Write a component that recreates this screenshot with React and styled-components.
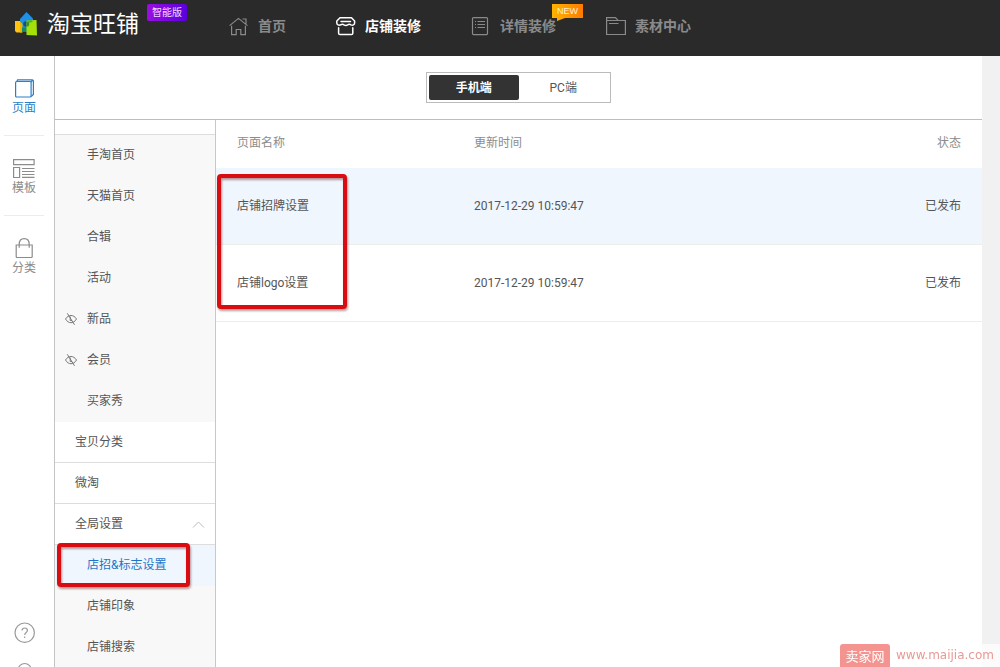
import React from 'react';
import styled, { createGlobalStyle } from 'styled-components';

const GlobalStyle = createGlobalStyle`
  * { box-sizing: border-box; }
  body {
    margin: 0;
    background: #f1f1f1;
    color: #555;
    font: 12px/20px Roboto, "Noto Sans CJK SC", sans-serif;
  }
  a { color: inherit; text-decoration: none; }
  button { font: inherit; color: inherit; border: 0; background: none; padding: 0; cursor: pointer; }
  svg { display: block; flex: none; }
`;

const Page = styled.div`
  display: flex;
  flex-direction: column;
  height: 100vh;
  overflow: hidden;
`;

const Header = styled.header`
  display: flex;
  align-items: flex-start;
  flex: none;
  height: 56px;
  padding-left: 14px;
  background: #2a2a2a;
`;

const Brand = styled.a`
  display: flex;
  align-items: flex-start;
  width: 215px;
`;

const BrandMark = styled.svg`
  margin-top: 11px;
`;

const BrandName = styled.span`
  margin: 8px 8px 0 9px;
  color: #fff;
  font-size: 23px;
  line-height: 34px;
`;

const EditionBadge = styled.span`
  margin-top: 4px;
  padding: 0 5px;
  border-radius: 2px;
  background: linear-gradient(90deg, #9a0ee0, #5a00dc);
  color: #f3d8ff;
  font-size: 10px;
  line-height: 17px;
`;

const TopNav = styled.nav`
  display: flex;
  gap: 50px;
  padding-top: 16px;
`;

const TopLink = styled.a`
  position: relative;
  display: flex;
  align-items: center;
  gap: 9px;
  color: ${(p) => (p.$active ? '#fff' : '#8a8a8a')};
  font-size: 14px;
  font-weight: 700;
`;

const NewBadge = styled.span`
  position: absolute;
  top: -12px;
  left: 81px;
  width: 31px;
  background: linear-gradient(90deg, #ffb400, #ff7a00);
  color: #fff3d0;
  font: 9px/14px "Liberation Sans", sans-serif;
  text-align: center;

  &::after {
    content: '';
    position: absolute;
    top: 14px;
    left: 5px;
    border-top: 3px solid #ffa800;
    border-right: 8px solid transparent;
  }
`;

const Body = styled.div`
  display: flex;
  flex: 1;
  min-height: 0;
  padding-right: 18px;
`;

const Rail = styled.nav`
  display: flex;
  flex-direction: column;
  flex: none;
  width: 55px;
  overflow: hidden;
  border-right: 1px solid #c4c4c4;
  background: #fff;
`;

const RailLink = styled.a`
  display: flex;
  flex-direction: column;
  align-items: center;
  width: 40px;
  height: 80px;
  margin-left: 4px;
  padding-top: 22px;
  border-bottom: 1px solid ${(p) => (p.$last ? 'transparent' : '#ececec')};
  color: ${(p) => (p.$active ? '#2b7fc8' : '#8c8c8c')};
`;

const RailTools = styled.div`
  display: flex;
  flex-direction: column;
  gap: 18px;
  margin: auto 0 -17px 14px;
  color: #999;
`;

const Workspace = styled.main`
  display: flex;
  flex: 1;
  flex-direction: column;
  min-width: 0;
  background: #fff;
`;

const DeviceBar = styled.div`
  display: flex;
  flex: none;
  justify-content: center;
  height: 64px;
  padding-top: 16px;
  border-bottom: 1px solid #bdbdbd;
`;

const DeviceSwitch = styled.div`
  display: flex;
  width: 185px;
  height: 31px;
  padding: 2px;
  border: 1px solid #bbb;
`;

const DeviceButton = styled.button`
  flex: 1;
  border-radius: 2px;
  background: ${(p) => (p.$active ? '#333' : '#fff')};
  color: ${(p) => (p.$active ? '#fff' : '#555')};
  font-weight: ${(p) => (p.$active ? 700 : 400)};
`;

const Columns = styled.div`
  display: flex;
  flex: 1;
  min-height: 0;
`;

const SideMenu = styled.nav`
  flex: none;
  width: 161px;
  padding-top: 14px;
  overflow: hidden;
  border-right: 1px solid #c8c8c8;
`;

const SubList = styled.div`
  border-top: 1px solid ${(p) => (p.$first ? '#ddd' : 'transparent')};
  margin-top: ${(p) => (p.$first ? '0' : '-1px')};
  background: #f8f8f8;
  background-clip: padding-box;
`;

const SubLink = styled.a`
  display: flex;
  align-items: center;
  height: 41px;
  padding: 0 11px 2px 10px;
  background: ${(p) => (p.$active ? '#eff6fe' : 'transparent')};
  color: ${(p) => (p.$active ? '#1f76c8' : '#555')};
`;

const IconSlot = styled.span`
  flex: none;
  width: 22px;
`;

const groupRow = `
  display: flex;
  align-items: center;
  justify-content: space-between;
  width: 100%;
  height: 41px;
  padding: 0 10px 0 20px;
  border-bottom: 1px solid #ddd;
`;

const GroupLink = styled.a`${groupRow}`;
const GroupButton = styled.button`${groupRow}`;

const Highlighted = styled.div`
  position: relative;
`;

const RedFrame = styled.div`
  position: absolute;
  top: ${(p) => p.$top}px;
  left: ${(p) => p.$left}px;
  width: ${(p) => p.$width}px;
  height: ${(p) => p.$height}px;
  border: 4px solid #d90c12;
  border-radius: 4px;
  filter: drop-shadow(1px 2px 1px rgba(90, 0, 0, 0.4));
  pointer-events: none;
`;

const TablePane = styled.section`
  position: relative;
  flex: 1;
  min-width: 0;
`;

const PageTable = styled.table`
  width: 100%;
  table-layout: fixed;
  border-collapse: separate;
  border-spacing: 0;
`;

const HeadCell = styled.th`
  width: ${(p) => p.$width || 'auto'};
  height: 48px;
  padding: 0 21px 2px;
  color: #8c8c8c;
  font-weight: 400;
  text-align: ${(p) => p.$align || 'left'};
`;

const Row = styled.tr`
  background: ${(p) => (p.$active ? '#eff6fe' : '#fff')};
`;

const Cell = styled.td`
  height: 77px;
  padding: 0 21px;
  border-bottom: 1px solid #ededed;
  text-align: ${(p) => p.$align || 'left'};
`;

const Watermark = styled.a`
  position: fixed;
  right: 0;
  bottom: 0;
  display: flex;
  align-items: center;
  gap: 6px;
  width: 160px;
  height: 23px;
  background: rgba(255, 255, 255, 0.7);
  color: #e79a96;
  font: 12px/23px "DejaVu Sans", sans-serif;
`;

const WatermarkTag = styled.span`
  width: 50px;
  border-radius: 3px 3px 0 0;
  background: #f49490;
  color: #fff;
  font: 13px/23px "Noto Sans CJK SC", sans-serif;
  text-align: center;
`;

const Icon = ({ w = 20, h = 20, children }) => (
  <svg width={w} height={h} viewBox={`0 0 ${w} ${h}`} fill="none" stroke="currentColor" strokeWidth="1.2" aria-hidden="true">
    {children}
  </svg>
);

const HomeIcon = () => (
  <Icon>
    <path d="M0.6 9.6 9.5 2.4l9 7.2M13.500 3h3.500v4.800M2.600 9.800v8.900h4.600v-5.200h4.600v5.200h4.600V9.800" />
  </Icon>
);

const ShopIcon = () => (
  <Icon>
    <path strokeWidth="1.500" strokeLinejoin="round" strokeLinecap="round" d="M4 1.800h11.500L18.600 5v2c0 1.800-1.800 2.700-3.600 1.800-1.300-.8-2.300-.8-3.400 0-1.200.8-2.400.8-3.600 0-1.100-.8-2.100-.8-3.300 0C2.800 9.700.8 8.800.8 7V5L4 1.800zM5 5.400h9.500M2.600 11.800v5.400c0 .8.5 1.400 1.400 1.400h11.400c.9 0 1.400-.6 1.400-1.400v-5.400" />
  </Icon>
);

const DetailIcon = () => (
  <Icon>
    <rect x="1.500" y="1.600" width="15" height="17" rx="1" />
    <path d="M4 5.500h1M6.500 5.500h7.500M4 8.500h1M6.500 8.500h7.500M4 11.500h1M6.500 11.500h7.500" />
  </Icon>
);

const FolderIcon = () => (
  <Icon>
    <path d="M.6 18.500V1.600h8.800l2.800 2.900h7.200v14H.6zM.6 4.500h11M3 7.500h9.500" />
  </Icon>
);

const PagesIcon = () => (
  <Icon w={20} h={20}>
    <rect x="1.600" y="3.500" width="15.500" height="15.500" rx="1" />
    <path d="M2.800 3.500 3.600 1.800h14.600c.8 0 1.200.5 1.200 1.200v13.500l-2.200 2M17 4l1.800-1.800" />
  </Icon>
);

const TemplateIcon = () => (
  <Icon w={22} h={20}>
    <path d="M.6 1.600h20.500v5H.6zM.6 9.500h6v10h-6zM9 10.500h12.500M9 13.500h12.500M9 16.500h12.500M9 19.400h12.500" />
  </Icon>
);

const BagIcon = () => (
  <Icon w={20} h={20}>
    <path d="M2.200 7h16v11.500c0 .6-.4 1-1 1h-14c-.6 0-1-.4-1-1V7zM5.200 9.800V6.500C5.200 3 7.200.7 10.200.7s5 2.300 5 5.800v3.300" />
  </Icon>
);

const HelpIcon = () => (
  <Icon w={22} h={22}>
    <circle cx="10.700" cy="10.700" r="9.700" />
    <path d="M8 8.600c0-1.600 1.200-2.600 2.700-2.600s2.700 1 2.700 2.500c0 2-2.700 2.200-2.700 4.500M10.700 14.600v1.400" />
  </Icon>
);

const RingIcon = () => (
  <Icon w={22} h={22}>
    <circle cx="10.700" cy="8" r="6.500" />
  </Icon>
);

const HiddenIcon = () => (
  <svg width="12" height="12" viewBox="0 0 12 12" fill="none" stroke="#777" aria-hidden="true">
    <path d="M.5 6C2 3.600 4 2.500 6 2.500S10 3.600 11.500 6C10 8.600 8 9.700 6 9.700S2 8.600.5 6zM2.300.3l7.200 11.500" />
    <path d="M5.200 3.700v3.800h1.800" />
  </svg>
);

const ChevronUp = () => (
  <svg width="13" height="8" viewBox="0 0 13 8" fill="none" stroke="#bbb" aria-hidden="true">
    <path d="M1 7.500 6.500 2 12 7.500" />
  </svg>
);

const topLinks = [
  { label: '首页', icon: <HomeIcon /> },
  { label: '店铺装修', icon: <ShopIcon />, active: true },
  { label: '详情装修', icon: <DetailIcon />, isNew: true },
  { label: '素材中心', icon: <FolderIcon /> },
];

const railLinks = [
  { label: '页面', icon: <PagesIcon />, active: true },
  { label: '模板', icon: <TemplateIcon /> },
  { label: '分类', icon: <BagIcon /> },
];

const storePages = [
  { label: '手淘首页' },
  { label: '天猫首页' },
  { label: '合辑' },
  { label: '活动' },
  { label: '新品', hidden: true },
  { label: '会员', hidden: true },
  { label: '买家秀' },
];

const rows = [
  { name: '店铺招牌设置', time: '2017-12-29 10:59:47', status: '已发布', active: true },
  { name: '店铺logo设置', time: '2017-12-29 10:59:47', status: '已发布' },
];

const SubItem = ({ label, hidden, active }) => (
  <SubLink href="#" $active={active}>
    <IconSlot>{hidden && <HiddenIcon />}</IconSlot>
    {label}
  </SubLink>
);

export default function App() {
  return (
    <Page>
      <GlobalStyle />
      <Header>
        <Brand href="#">
          <BrandMark width="24" height="26" viewBox="0 0 24 26" aria-hidden="true">
            <path d="M1 10h7v11.500H2.500L1 20z" fill="#ffc20e" />
            <path d="M12.500 1 19 7.500V17l-6.500 3L6 17V8z" fill="#1f8fe8" />
            <path d="M6 10.500 8.500 13v8.500H6z" fill="#e8b500" />
            <path d="M8 16.500h5V21H8z" fill="#128a6a" />
            <circle cx="12" cy="13" r="2.800" fill="#174f80" />
            <path d="M12.500 9.500 22.500 9l.5 15.500-10.500-.5z" fill="#a5e00b" />
            <path d="M12.500 10.200a2.800 2.800 0 0 1 0 5.600z" fill="#3d8f2e" />
            <path d="m12.500 9.500 5-.3 1.500 1.500-3 1z" fill="#43b52c" />
          </BrandMark>
          <BrandName>淘宝旺铺</BrandName>
          <EditionBadge>智能版</EditionBadge>
        </Brand>
        <TopNav aria-label="主导航">
          {topLinks.map((l) => (
            <TopLink key={l.label} href="#" $active={l.active}>
              {l.icon}
              {l.label}
              {l.isNew && <NewBadge>NEW</NewBadge>}
            </TopLink>
          ))}
        </TopNav>
      </Header>
      <Body>
        <Rail aria-label="工具栏">
          {railLinks.map((l, i) => (
            <RailLink key={l.label} href="#" $active={l.active} $last={i === railLinks.length - 1}>
              {l.icon}
              {l.label}
            </RailLink>
          ))}
          <RailTools>
            <button type="button" aria-label="帮助"><HelpIcon /></button>
            <button type="button" aria-label="反馈"><RingIcon /></button>
          </RailTools>
        </Rail>
        <Workspace>
          <DeviceBar>
            <DeviceSwitch>
              <DeviceButton type="button" $active>手机端</DeviceButton>
              <DeviceButton type="button">PC端</DeviceButton>
            </DeviceSwitch>
          </DeviceBar>
          <Columns>
            <SideMenu aria-label="页面列表">
              <SubList $first>
                {storePages.map((p) => <SubItem key={p.label} {...p} />)}
              </SubList>
              <GroupLink href="#">宝贝分类</GroupLink>
              <GroupLink href="#">微淘</GroupLink>
              <GroupButton type="button" aria-expanded="true">
                全局设置
                <ChevronUp />
              </GroupButton>
              <SubList>
                <Highlighted>
                  <SubItem label="店招&标志设置" active />
                  <RedFrame $top={-2} $left={2} $width={133} $height={44} />
                </Highlighted>
                <SubItem label="店铺印象" />
                <SubItem label="店铺搜索" />
              </SubList>
            </SideMenu>
            <TablePane>
              <PageTable>
                <thead>
                  <tr>
                    <HeadCell scope="col" $width="237px">页面名称</HeadCell>
                    <HeadCell scope="col">更新时间</HeadCell>
                    <HeadCell scope="col" $align="right">状态</HeadCell>
                  </tr>
                </thead>
                <tbody>
                  {rows.map((r) => (
                    <Row key={r.name} $active={r.active}>
                      <Cell>{r.name}</Cell>
                      <Cell>{r.time}</Cell>
                      <Cell $align="right">{r.status}</Cell>
                    </Row>
                  ))}
                </tbody>
              </PageTable>
              <RedFrame $top={54} $left={1} $width={130} $height={135} />
            </TablePane>
          </Columns>
        </Workspace>
      </Body>
      <Watermark href="#">
        <WatermarkTag>卖家网</WatermarkTag>
        www.maijia.com
      </Watermark>
    </Page>
  );
}
